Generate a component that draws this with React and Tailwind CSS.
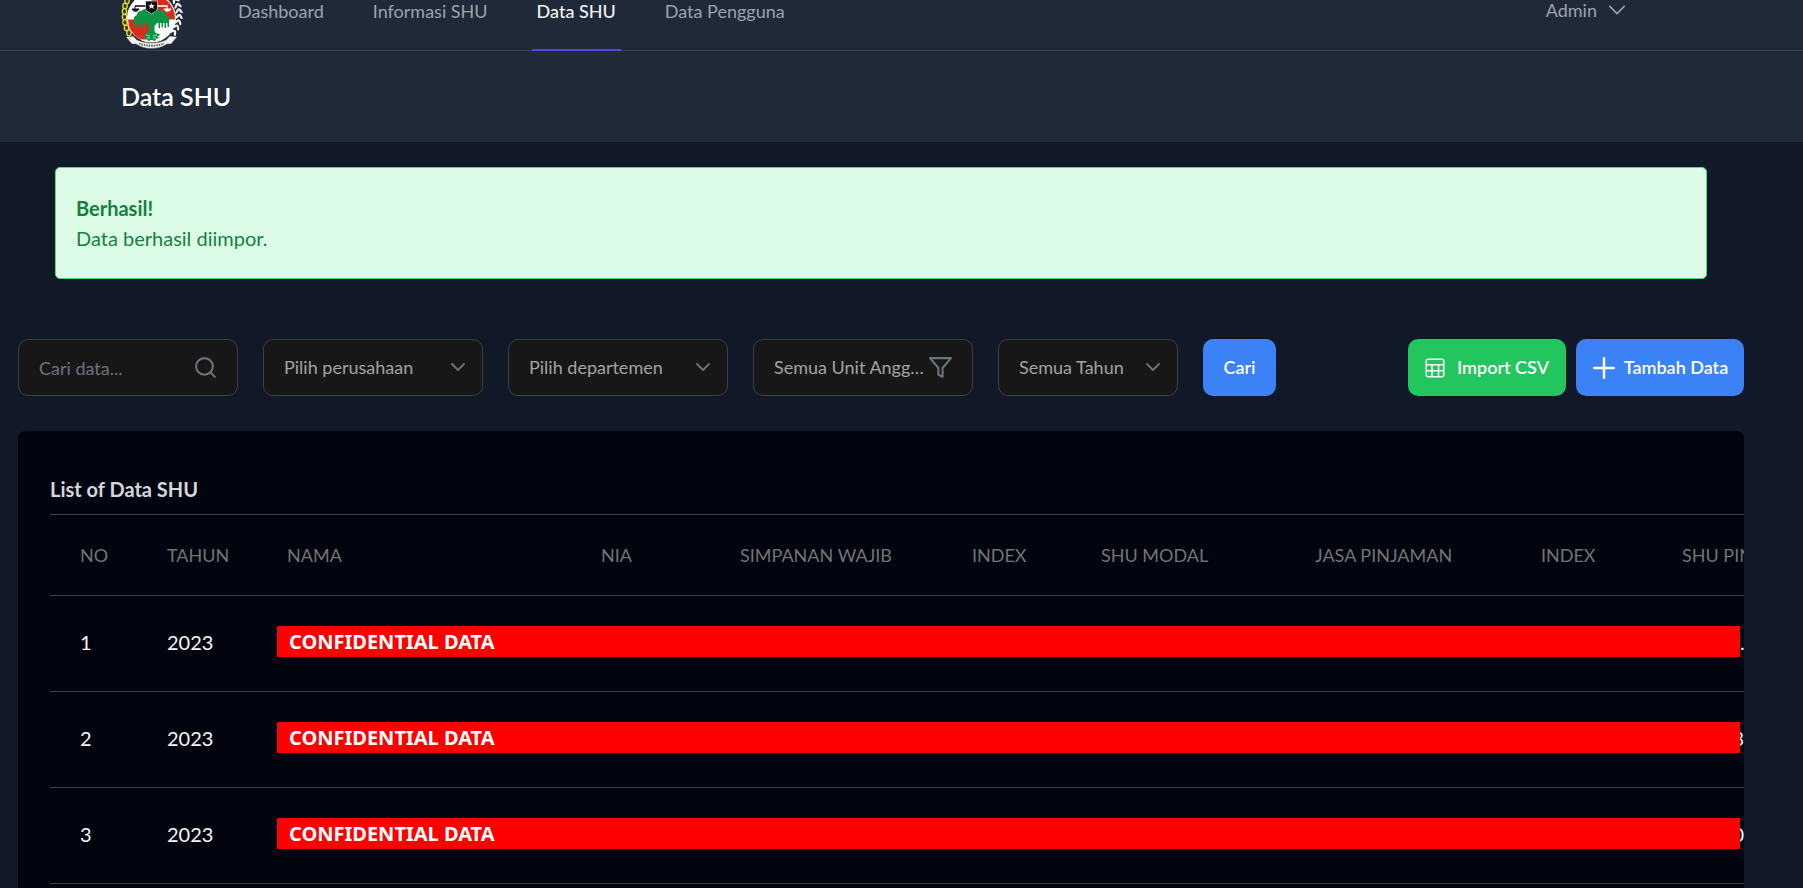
import { FiFilter, FiSearch } from "react-icons/fi";

const links = [
  { label: "Dashboard" },
  { label: "Informasi SHU" },
  { label: "Data SHU", active: true },
  { label: "Data Pengguna" },
];

const columns = [
  { label: "No", width: "w-[87px]" },
  { label: "Tahun", width: "w-[120px]" },
  { label: "Nama", width: "w-[314px]" },
  { label: "NIA", width: "w-[139px]" },
  { label: "Simpanan Wajib", width: "w-[232px]" },
  { label: "Index", width: "w-[129px]" },
  { label: "SHU Modal", width: "w-[214px]" },
  { label: "Jasa Pinjaman", width: "w-[226px]" },
  { label: "Index", width: "w-[141px]" },
  { label: "SHU Pinjaman", width: "" },
];

const rows = [
  { no: 1, year: 2023, rest: ".0", side: "justify-start" },
  { no: 2, year: 2023, rest: "3", side: "justify-end" },
  { no: 3, year: 2023, rest: "0", side: "justify-end" },
];

const chainLinks = [
  [14, 6], [9, 10], [6, 15], [4, 20], [3.5, 25.5], [3.5, 31], [4, 36.5], [5.5, 42], [8, 47],
];

const leaves = [
  [48, 7, 40], [52, 11, 50], [55, 15.5, 62], [57, 20.5, 75], [58, 26, 85], [58, 31.5, 95], [57, 37, 108], [55, 42, 120], [52, 47, 132],
];

function Logo() {
  return (
    <svg viewBox="0 0 62 64" className="h-16 w-[62px]" role="img" aria-label="Logo">
      {chainLinks.map(([x, y], i) => (
        <ellipse key={i} cx={x} cy={y} rx="2.2" ry="2.8" fill="#3b3a16" stroke="#e6dc3c" strokeWidth="1.3" />
      ))}
      {leaves.map(([x, y, r], i) => (
        <g key={i} transform={`translate(${x} ${y}) rotate(${r})`}>
          <ellipse cx="0" cy="-2" rx="3" ry="1.2" fill="#f4f4f4" transform="rotate(-35)" />
          <ellipse cx="0" cy="2" rx="3" ry="1.2" fill="#f4f4f4" transform="rotate(35)" />
        </g>
      ))}
      <circle cx="30.500" cy="32" r="24.500" fill="#fff" />
      <path d="M30.500 8.500a24 24 0 0 1 23.500 25h-23.500z" fill="#dc2a1e" />
      <path d="M7 33.500h23.500v20h-11a24 24 0 0 1-12.500-20z" fill="#dc2a1e" />
      <path
        d="M13 41V36C12 33 13 30 16 29C16 26 18 25 21 24.500C23 22.500 27 22 30.500 22.500C34 22 38 22.500 40 24.500C43 25 45 26 45 29C48 30 49 33 48 36V41H46.500V37H45V42H43.500V37H42V41.500H40.500V37H39V42H37.500V37H36L33.500 40V45C34 47 36 48 39 48L38 50H36L38 52L35 53L34 55L30.500 54L27 55L26 53L23 52L25 50H23L22 48C25 48 27 47 27.500 45V40L25 37H23.500V42H22V37H20.500V41.500H19V37H17.500V42H16V37H14.500V41Z"
        fill="#0b9444"
      />
      <path d="M25 49l4 1M36 49l-4 1M26 52h3M32 52h3" stroke="#fff" strokeWidth=".6" />
      <path d="M14 20h12" stroke="#111" strokeWidth="1.600" />
      <path d="M36 20h11" stroke="#fff" strokeWidth="1.600" />
      <path d="M14 20v3m-3 0h7c-1 3-6 3-7 0" fill="#111" stroke="#111" />
      <path d="M46 20v3m-3 0h7c-1 3-6 3-7 0" fill="#fff" stroke="#fff" />
      <path d="M24.500 15h12v7c0 3-3 4-6 6-3-2-6-3-6-6z" fill="#111" stroke="#fff" strokeWidth=".6" />
      <path d="M30.500 17l1 2.200h2.300l-1.800 1.500.7 2.300-2.200-1.400-2.200 1.400.7-2.300-1.800-1.500h2.300z" fill="#fff" />
      <path d="M5 51l7-1 4 4c9 4 20 4 29 0l4-4 7 1-6 7-4 0c-9 6-22 6-31 0l-4 0z" fill="#f4f4f4" stroke="#555" strokeWidth=".5" />
      <path d="M18 57.500c8 3 17 3 25 0" fill="none" stroke="#555" strokeWidth="1.800" strokeDasharray="1.500 1" />
    </svg>
  );
}

function Chevron({ className }) {
  return (
    <svg viewBox="0 0 20 20" fill="none" stroke="currentColor" strokeLinecap="round" strokeLinejoin="round" className={className}>
      <path d="M4 7l6 6 6-6" />
    </svg>
  );
}

function TableIcon() {
  return (
    <svg viewBox="0 0 20 20" fill="none" stroke="currentColor" strokeWidth="1.500" className="size-5 shrink-0" aria-hidden="true">
      <rect x="1.250" y="1.250" width="17.500" height="17.500" rx="2" />
      <path d="M1.250 6.800h17.500M1.250 12.700h17.500M7 6.800v12M13.500 6.800v12" />
    </svg>
  );
}

function PlusIcon() {
  return (
    <svg viewBox="0 0 24 24" fill="none" stroke="currentColor" strokeWidth="2.500" strokeLinecap="round" className="size-6 shrink-0" aria-hidden="true">
      <path d="M12 2.250v19.500M2.250 12h19.500" />
    </svg>
  );
}

function FilterSelect({ label, width, funnel }) {
  return (
    <div className={`relative ${width}`}>
      <select
        aria-label={label}
        className={`h-[57px] w-full appearance-none truncate rounded-[10px] border border-[#404040] bg-[#171717] pl-5 text-[18px] text-[#a3a3a3] ${funnel ? "pr-11" : "pr-10"}`}
      >
        <option>{label}</option>
      </select>
      {funnel ? (
        <FiFilter className="pointer-events-none absolute top-4 right-5 size-[25px] text-[#6b7280]" />
      ) : (
        <Chevron className="pointer-events-none absolute top-[18px] right-[15px] size-5 stroke-[1.800] text-[#6b7280]" />
      )}
    </div>
  );
}

export default function App() {
  return (
    <div className="h-screen overflow-hidden bg-[#111827] font-[Lato,sans-serif]">
      <header className="bg-[#1f2937]">
        <nav className="-mt-[30px] border-b border-[#374151]">
          <div className="mr-[41px]">
            <div className="mx-auto flex h-20 max-w-[1600px] justify-between px-10">
              <div className="flex">
                <a href="#" className="flex items-end">
                  <Logo />
                </a>
                <div className="-mb-px ml-[50px] flex gap-[39px]">
                  {links.map((l) => (
                    <a
                      key={l.label}
                      href="#"
                      className={`flex items-center border-b-2 px-[5px] pt-1 text-[18px] ${l.active ? "border-[#4f46e5] font-medium text-[#f3f4f6]" : "border-transparent text-[#9ca3af]"}`}
                    >
                      {l.label}
                    </a>
                  ))}
                </div>
              </div>
              <button type="button" className="flex items-center gap-2 px-3 text-[18px] text-[#9ca3af]">
                Admin
                <Chevron className="size-6 stroke-[1.300]" />
              </button>
            </div>
          </div>
        </nav>
        <div className="mr-[41px]">
          <div className="mx-auto max-w-[1600px] px-10 py-[30px]">
            <h2 className="text-[25px] leading-[31px] font-semibold text-white">Data SHU</h2>
          </div>
        </div>
      </header>

      <main className="mr-[41px] px-[18px] pt-[25px]">
        <div role="alert" className="mx-[37px] rounded-[5px] border border-[#4ade80] bg-[#dcfce7] px-5 py-[25px] text-[20px] leading-[30px] text-[#15803d]">
          <p className="font-bold">Berhasil!</p>
          <p>Data berhasil diimpor.</p>
        </div>

        <div className="mt-[60px] flex justify-between">
          <form className="flex gap-[25px]">
            <div className="relative w-[220px]">
              <input
                type="text"
                aria-label="Cari data"
                placeholder="Cari data..."
                className="h-[57px] w-full rounded-[10px] border border-[#404040] bg-[#171717] pr-12 pl-5 text-[18px] text-[#a3a3a3] placeholder:text-[#6b7280]"
              />
              <FiSearch className="pointer-events-none absolute top-4 right-5 size-[25px] text-[#6b7280]" />
            </div>
            <FilterSelect label="Pilih perusahaan" width="w-[220px]" />
            <FilterSelect label="Pilih departemen" width="w-[220px]" />
            <FilterSelect label="Semua Unit Anggota" width="w-[220px]" funnel />
            <FilterSelect label="Semua Tahun" width="w-[180px]" />
            <button type="button" className="w-[73px] rounded-[10px] bg-[#3b82f6] text-[18px] font-semibold text-white">
              Cari
            </button>
          </form>
          <div className="flex gap-[10px]">
            <button type="button" className="flex w-[158px] items-center justify-center gap-3 rounded-[10px] bg-[#22c55e] text-[18px] font-semibold text-white">
              <TableIcon />
              Import CSV
            </button>
            <button type="button" className="flex w-[168px] items-center justify-center gap-2 rounded-[10px] bg-[#3b82f6] text-[18px] font-semibold text-white">
              <PlusIcon />
              Tambah Data
            </button>
          </div>
        </div>

        <section className="mt-[35px] overflow-hidden rounded-t-[8px] bg-[#02050f] pt-[43px] pb-10 pl-8">
          <h3 className="pb-[10px] text-[20px] leading-[30px] font-bold text-[#d4d7dc]">List of Data SHU</h3>
          <table className="w-full table-fixed border-t border-[#404040] text-left">
            <thead>
              <tr className="h-[81px] border-b border-[#404040]">
                {columns.map((c, i) => (
                  <th key={i} scope="col" className={`pl-[30px] text-[18px] font-normal whitespace-nowrap text-[#737373] uppercase ${c.width}`}>
                    {c.label}
                  </th>
                ))}
              </tr>
            </thead>
            <tbody className="text-[20px] text-[#f5f5f5]">
              {rows.map((r) => (
                <tr key={r.no} className="h-24 border-b border-[#404040]">
                  <td className="pb-[3px] pl-[30px]">{r.no}</td>
                  <td className="pb-[3px] pl-[30px]">{r.year}</td>
                  <td colSpan={8} className="pb-1 pl-5">
                    <div className="flex items-center">
                      <div className="h-[31px] flex-1 bg-[#ff0000] pl-3 font-['Noto_Sans',sans-serif] text-[20px] leading-[31px] font-bold text-white">
                        CONFIDENTIAL DATA
                      </div>
                      <div className={`flex w-1 overflow-hidden ${r.side}`}>{r.rest}</div>
                    </div>
                  </td>
                </tr>
              ))}
            </tbody>
          </table>
        </section>
      </main>
    </div>
  );
}
